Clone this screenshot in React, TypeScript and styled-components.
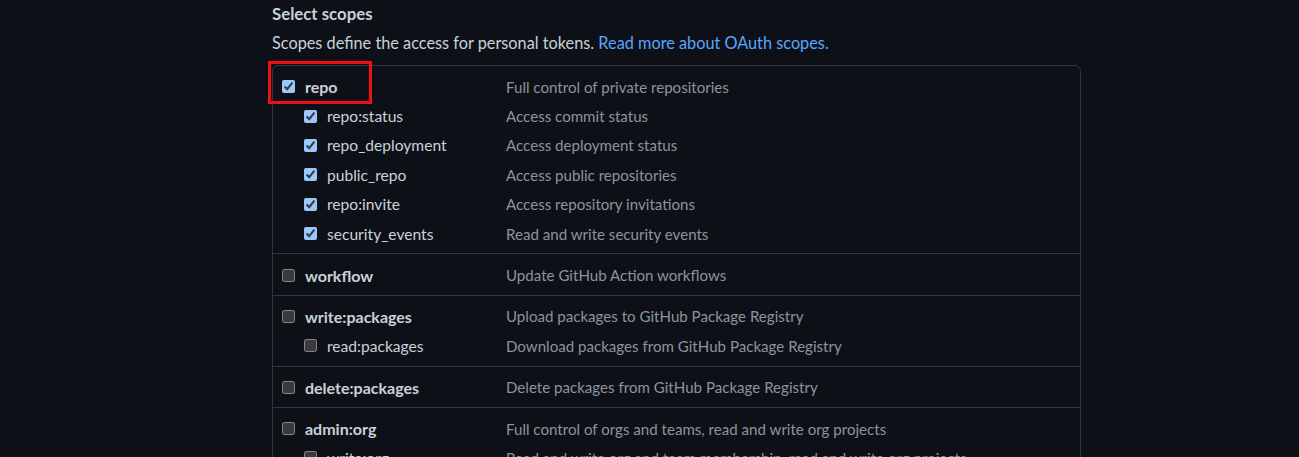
import React from "react";
import styled, { createGlobalStyle } from "styled-components";

const Global = createGlobalStyle`
  html, body {
    margin: 0;
    padding: 0;
    background: #0d1117;
    color-scheme: dark;
    overflow: hidden;
  }
  body {
    font-family: Lato, "Liberation Sans", sans-serif;
    color: #c9d1d9;
  }
`;

const Page = styled.div`
  padding: 2px 0 0 272px;
  width: 809px;
`;

const Title = styled.h3`
  margin: 0;
  font-size: 16.8px;
  line-height: 24px;
  font-weight: 700;
  color: #c9d1d9;
`;

const Note = styled.p`
  margin: 5px 0 10px;
  font-size: 16.3px;
  line-height: 24px;
  color: #c9d1d9;
`;

const Link = styled.a`
  color: #58a6ff;
  text-decoration: none;
`;

const Table = styled.div`
  border: 1px solid #30363d;
  border-radius: 6px;
  position: relative;
`;

const Group = styled.div`
  padding: 6px 10px 5px 9px;
  & + & {
    border-top: 1px solid #30363d;
  }
`;

const Row = styled.div`
  display: grid;
  grid-template-columns: 224px 1fr;
  align-items: center;
  height: 29.4px;
  font-size: 15.1px;
`;

const LabelCell = styled.label<{ $child?: boolean }>`
  display: flex;
  align-items: center;
  gap: 10px;
  padding-left: ${(p) => (p.$child ? "22px" : "0")};
  font-weight: ${(p) => (p.$child ? 400 : 700)};
  font-size: ${(p) => (p.$child ? "15.6px" : "16px")};
  color: #c9d1d9;
`;

const Box = styled.input`
  margin: 0;
  width: 13px;
  height: 13px;
  flex: none;
`;

const Desc = styled.span`
  color: #8b949e;
`;

const Highlight = styled.div`
  position: absolute;
  left: -5px;
  top: -5px;
  width: 98px;
  height: 37px;
  border: 3px solid #ee1111;
  pointer-events: none;
`;

type Scope = { name: string; desc: string; checked?: boolean };
type GroupData = { main: Scope; children?: Scope[] };

const groups: GroupData[] = [
  {
    main: { name: "repo", desc: "Full control of private repositories", checked: true },
    children: [
      { name: "repo:status", desc: "Access commit status", checked: true },
      { name: "repo_deployment", desc: "Access deployment status", checked: true },
      { name: "public_repo", desc: "Access public repositories", checked: true },
      { name: "repo:invite", desc: "Access repository invitations", checked: true },
      { name: "security_events", desc: "Read and write security events", checked: true },
    ],
  },
  { main: { name: "workflow", desc: "Update GitHub Action workflows" } },
  {
    main: { name: "write:packages", desc: "Upload packages to GitHub Package Registry" },
    children: [{ name: "read:packages", desc: "Download packages from GitHub Package Registry" }],
  },
  { main: { name: "delete:packages", desc: "Delete packages from GitHub Package Registry" } },
  {
    main: { name: "admin:org", desc: "Full control of orgs and teams, read and write org projects" },
    children: [
      { name: "write:org", desc: "Read and write org and team membership, read and write org projects" },
    ],
  },
];

function ScopeRow({ scope, child }: { scope: Scope; child?: boolean }) {
  return (
    <Row>
      <LabelCell $child={child}>
        <Box type="checkbox" checked={!!scope.checked} readOnly />
        {scope.name}
      </LabelCell>
      <Desc>{scope.desc}</Desc>
    </Row>
  );
}

export default function App() {
  return (
    <>
      <Global />
      <Page>
        <Title>Select scopes</Title>
        <Note>
          Scopes define the access for personal tokens.{" "}
          <Link href="#">Read more about OAuth scopes.</Link>
        </Note>
        <Table>
          <Highlight />
          {groups.map((g) => (
            <Group key={g.main.name}>
              <ScopeRow scope={g.main} />
              {g.children?.map((c) => (
                <ScopeRow key={c.name} scope={c} child />
              ))}
            </Group>
          ))}
        </Table>
      </Page>
    </>
  );
}
